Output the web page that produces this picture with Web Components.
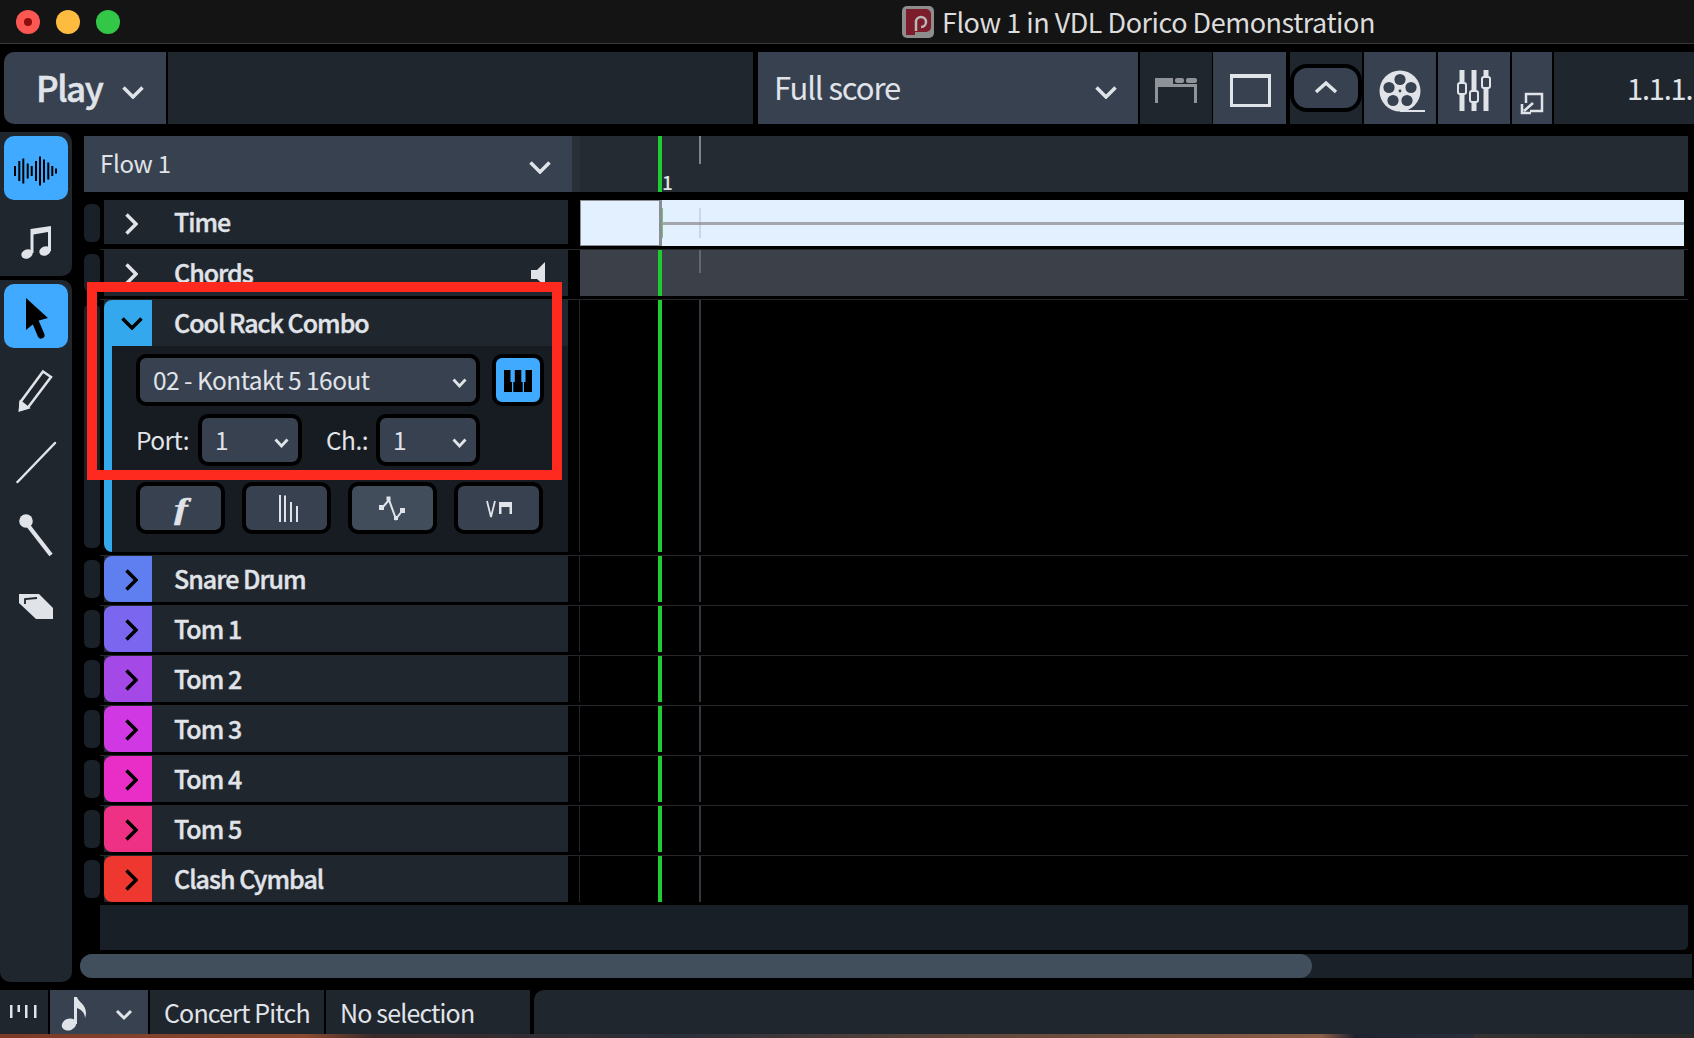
<!DOCTYPE html>
<html>
<head>
<meta charset="utf-8">
<title>Flow 1 in VDL Dorico Demonstration</title>
<style>
    html, body {
        margin: 0;
        padding: 0;
        background: #000;
    }
    body {
        width: 1694px;
        height: 1038px;
        overflow: hidden;
        color: #e0e4e9;
        font-family: "Noto Sans CJK JP", "Noto Sans", sans-serif;
        display: flex;
        flex-direction: column;
    }
    svg { display: block; }
</style>
</head>
<body>

<title-bar text="Flow 1 in VDL Dorico Demonstration"></title-bar>

<top-bar>
    <tool-cell width="162" tone="light" shape="left" lead="4"><pick-label size="35" weight="500" track="-1.5" pad="32" gap="20" chevy="8">Play</pick-label></tool-cell>
    <tool-cell width="585" tone="dark" lead="2"></tool-cell>
    <tool-cell width="380" tone="light" lead="5"><pick-label size="31" weight="400" track="-1.1" pad="16" spread chevy="8">Full score</pick-label></tool-cell>
    <tool-cell width="72" tone="dark" lead="2">
        <svg width="72" height="72" viewBox="0 0 72 72" fill="#8f9398">
            <path d="M15 26h18v6h24v19h-3V35H18v16h-3z"/>
            <rect x="35" y="26" width="9" height="5" rx="2"/><rect x="46" y="26" width="11" height="5" rx="2"/>
        </svg>
    </tool-cell>
    <tool-cell width="73" tone="light" lead="1">
        <svg width="73" height="72" viewBox="0 0 73 72"><rect x="18.5" y="23.5" width="38" height="30" fill="none" stroke="currentColor" stroke-width="3"/><rect x="17" y="22" width="41" height="4" fill="currentColor"/></svg>
    </tool-cell>
    <tool-cell width="72" tone="dark" lead="4">
        <svg width="72" height="72" viewBox="0 0 72 72">
            <rect x="2" y="14" width="68" height="44" rx="15" fill="#374150" stroke="#000" stroke-width="4"/>
            <path d="M26 40l10-9 10 9" fill="none" stroke="currentColor" stroke-width="3.5"/>
        </svg>
    </tool-cell>
    <tool-cell width="72" tone="light" lead="2">
        <svg width="72" height="72" viewBox="0 0 72 72">
            <circle cx="36" cy="39" r="20.5" fill="currentColor"/>
            <path d="M36 58h25v2H36z" fill="currentColor"/>
            <g fill="#374150">
                <circle cx="36" cy="27.5" r="5.6"/><circle cx="47" cy="35.5" r="5.6"/><circle cx="43" cy="48.5" r="5.6"/>
                <circle cx="29" cy="48.5" r="5.6"/><circle cx="25" cy="35.5" r="5.6"/><circle cx="36" cy="39" r="1.4"/>
            </g>
        </svg>
    </tool-cell>
    <tool-cell width="72" tone="light" lead="2">
        <svg width="72" height="72" viewBox="0 0 72 72" fill="currentColor">
            <rect x="21.500" y="18" width="5" height="41"/><rect x="33.500" y="18" width="5" height="41"/><rect x="45.500" y="18" width="5" height="41"/>
            <g fill="#374150" stroke="currentColor" stroke-width="2">
                <rect x="20" y="31" width="8" height="11" rx="2"/><rect x="32" y="39" width="8" height="11" rx="2"/><rect x="44" y="25" width="8" height="11" rx="2"/>
            </g>
        </svg>
    </tool-cell>
    <tool-cell width="40" tone="light" lead="2">
        <svg width="40" height="72" viewBox="0 0 40 72" fill="none" stroke="currentColor" stroke-width="2.5">
            <path d="M14 51V42h16v17H18"/>
            <path d="M21 51l-9 8M10 52v9h9" stroke-width="2.6"/>
        </svg>
    </tool-cell>
    <tool-cell width="140" tone="dark" lead="2"><position-text>1.1.1.</position-text></tool-cell>
</top-bar>

<work-area>
    <tool-rail slot="rail">
        <rail-group>
            <rail-button active>
                <svg width="64" height="64" viewBox="0 0 64 64" stroke="#000" stroke-width="2">
                    <path d="M11 30v10M15.3 25v20M19.3 22.5v25M23.7 27.5v15M27.7 30v10M32 25v20M36 20.5v29M40 23.5v23M44.3 26.5v17M48.3 30v10M52 32.5v5"/>
                </svg>
            </rail-button>
            <rail-button height="72">
                <svg width="72" height="72" viewBox="0 0 72 72" fill="currentColor">
                    <ellipse cx="27" cy="54" rx="5.8" ry="4.5" transform="rotate(-22 27 54)"/>
                    <ellipse cx="45" cy="51" rx="5.8" ry="4.5" transform="rotate(-22 45 51)"/>
                    <path d="M30.500 53V29l20.500-3v25h-3V32l-14.500 2.500V53z"/>
                </svg>
            </rail-button>
        </rail-group>
        <rail-group grow>
            <rail-button active>
                <svg width="64" height="64" viewBox="0 0 64 64" fill="#000">
                    <path d="M22 14l22 20-11 3-11 9z"/>
                    <path d="M29 32l8 19" stroke="#000" stroke-width="7" stroke-linecap="round"/>
                </svg>
            </rail-button>
            <rail-button height="72" first>
                <svg width="72" height="72" viewBox="0 0 72 72" fill="none" stroke="currentColor" stroke-width="2.5">
                    <path d="M43 16.500l8 5.500-23 30.500-8 2.500.5-8z"/>
                    <path d="M20 55l.8-8 7.200 5.700z" fill="currentColor"/>
                </svg>
            </rail-button>
            <rail-button height="72">
                <svg width="72" height="72" viewBox="0 0 72 72"><path d="M17.500 55L55 16" stroke="currentColor" stroke-width="2.5" stroke-linecap="round"/></svg>
            </rail-button>
            <rail-button height="72">
                <svg width="72" height="72" viewBox="0 0 72 72" fill="currentColor"><circle cx="26" cy="22" r="6.8"/><path d="M27 25l24 31" stroke="currentColor" stroke-width="4.2"/></svg>
            </rail-button>
            <rail-button height="72">
                <svg width="72" height="72" viewBox="0 0 72 72" fill="currentColor">
                    <path d="M19 23h20l14 14v11H36L19 32z"/>
                    <path d="M25 33v-5l12-1" fill="none" stroke="#20262e" stroke-width="1.8"/>
                </svg>
            </rail-button>
        </rail-group>
    </tool-rail>

    <flow-head></flow-head>

    <track-row name="Time" short lane="time"></track-row>
    <track-row name="Chords" lane="chords">
        <svg slot="end" width="15" height="24" viewBox="0 0 15 24" fill="currentColor"><path d="M14 0v24L6 17H0V8h6z"/></svg>
    </track-row>
    <track-row name="Cool Rack Combo" color="#33a8ec" open>
        <rack-panel>
            <select-box width="344" slot="device">02 - Kontakt 5 16out</select-box>
            <square-button slot="device" width="52" active>
                <svg width="44" height="44" viewBox="0 0 44 44" fill="#000">
                    <rect x="8" y="12" width="6.500" height="12"/><rect x="18.800" y="12" width="6.500" height="12"/><rect x="29.500" y="12" width="6.500" height="12"/>
                    <rect x="8" y="24" width="8" height="10"/><rect x="17.300" y="24" width="9.400" height="10"/><rect x="28" y="24" width="8" height="10"/>
                </svg>
            </square-button>
            <span slot="port" class="port-label">Port:</span>
            <select-box width="104" slot="port">1</select-box>
            <span slot="port" class="ch">Ch.:</span>
            <select-box width="104" slot="port">1</select-box>
            <square-button slot="tools" width="89"><span style="display:inline-block; font:italic 700 30px 'Liberation Serif', serif; line-height:36px; margin-top:2px; transform:scaleX(1.35); -webkit-text-stroke:.5px currentColor">f</span></square-button>
            <square-button slot="tools" width="89">
                <svg width="40" height="40" viewBox="0 0 40 40" stroke="currentColor" stroke-width="2" style="margin:4px 4px 0 0"><path d="M15 5v27M20 5.500v26.500M26 12v20M32 16v16"/></svg>
            </square-button>
            <square-button slot="tools" width="89" tone="#414d5b">
                <svg width="40" height="40" viewBox="0 0 40 40" fill="currentColor" stroke="none" style="margin:4px 0 0 3px">
                    <path d="M8 18l7-8 7 19 6-8" fill="none" stroke="currentColor" stroke-width="2"/>
                    <rect x="5" y="15" width="5" height="5"/><rect x="12.500" y="6.500" width="4" height="4"/><rect x="20" y="26" width="4" height="4"/><rect x="26" y="18" width="5" height="5"/>
                </svg>
            </square-button>
            <square-button slot="tools" width="89">
                <svg width="40" height="40" viewBox="0 0 40 40" fill="currentColor" style="margin-top:7px">
                    <path d="M8 9l4 16 4-16" fill="none" stroke="currentColor" stroke-width="1.800"/>
                    <path d="M20 10h13v12h-2.500v-7h-8v7H20z"/>
                </svg>
            </square-button>
        </rack-panel>
    </track-row>
    <track-row name="Snare Drum" color="#5f7ef0"></track-row>
    <track-row name="Tom 1" color="#7a66ef"></track-row>
    <track-row name="Tom 2" color="#a548e8"></track-row>
    <track-row name="Tom 3" color="#cf38e2"></track-row>
    <track-row name="Tom 4" color="#e82ec6"></track-row>
    <track-row name="Tom 5" color="#ee3184"></track-row>
    <track-row name="Clash Cymbal" color="#ee372f"></track-row>

    <empty-strip></empty-strip>
    <scroll-bar slot="scroll"></scroll-bar>
    <mark-box slot="mark"></mark-box>
</work-area>

<status-bar>
    <status-cell width="48">
        <svg width="48" height="44" viewBox="0 0 48 44" fill="currentColor"><rect x="10" y="15" width="2.500" height="13"/><rect x="17.500" y="15" width="2.500" height="7"/><rect x="25" y="15" width="2.500" height="13"/><rect x="34" y="15" width="2.500" height="13"/></svg>
    </status-cell>
    <status-cell width="98" tone="light" lead="2">
        <svg width="98" height="44" viewBox="0 0 98 44" fill="currentColor">
            <ellipse cx="19" cy="34.500" rx="7.500" ry="5.800" transform="rotate(-22 19 34.500)"/>
            <path d="M24 34V7h3c1 5 9 7 9 16 0 2-.5 3.500-1 5 0-6-5-9-8-10v16z"/>
            <path d="M67 21l7 7 7-7" fill="none" stroke="currentColor" stroke-width="3"/>
        </svg>
    </status-cell>
    <status-cell width="174" lead="2" pad="14">Concert Pitch</status-cell>
    <status-cell width="204" lead="2" pad="14">No selection</status-cell>
    <status-cell width="1160" lead="4" shape="round"></status-cell>
</status-bar>
<wall-strip></wall-strip>

<script>
const chevronSvg = (w, h, color, dir, stroke) => {
    const paths = {
        down: `M1.500 1.500L${w / 2} ${h - 2}L${w - 1.500} 1.500`,
        right: `M1.500 1.500L${w - 2} ${h / 2}L1.500 ${h - 1.500}`
    };
    return `<svg width="${w}" height="${h}" viewBox="0 0 ${w} ${h}" style="display:block;flex:none"><path d="${paths[dir]}" fill="none" stroke="${color}" stroke-width="${stroke}"/></svg>`;
};

class TitleBar extends HTMLElement {
    constructor() {
        super();
        this.attachShadow({ mode: 'open' });
    }
    connectedCallback() {
        this.shadowRoot.innerHTML = `
        <style>
            :host { display: flex; flex: none; height: 43px; background: #141414; border-bottom: 1px solid #3a3a3a; align-items: center; position: relative; }
            .lights { display: flex; gap: 16px; margin-left: 16px; }
            .lights i { width: 24px; height: 24px; border-radius: 50%; display: flex; align-items: center; justify-content: center; }
            .lights b { width: 8px; height: 8px; border-radius: 50%; background: #8e0c0c; }
            .mid { display: flex; align-items: center; margin-left: 782px; gap: 8px; font-size: 27px; letter-spacing: -.48px; color: #dcdcdc; white-space: nowrap; }
        </style>
        <div class="lights">
            <i style="background:#fc5753"><b></b></i>
            <i style="background:#fdbc40"></i>
            <i style="background:#33c748"></i>
        </div>
        <div class="mid">
            <svg width="32" height="32" viewBox="0 0 32 32">
                <rect width="32" height="32" rx="5" fill="#8d8d8d"/>
                <path d="M4 3h20a5 5 0 0 1 5 5v13a5 5 0 0 1-5 5H13v3H4z" fill="#7d1d2b"/>
                <path d="M14 25v-9a5 5 0 1 1 5 5" fill="none" stroke="#b9b9b9" stroke-width="2.500"/>
            </svg>
            <span>${this.getAttribute('text')}</span>
        </div>`;
    }
}

class TopBar extends HTMLElement {
    constructor() {
        super();
        this.attachShadow({ mode: 'open' });
    }
    connectedCallback() {
        this.shadowRoot.innerHTML = `
        <style>
            :host { display: flex; flex: none; height: 72px; margin-top: 8px; overflow: hidden; }
        </style>
        <slot></slot>`;
    }
}

class ToolCell extends HTMLElement {
    constructor() {
        super();
        this.attachShadow({ mode: 'open' });
    }
    connectedCallback() {
        const tone = this.getAttribute('tone') === 'light' ? '#374150' : '#20262e';
        const radius = this.getAttribute('shape') === 'left' ? '10px 0 0 10px' : '0';
        this.shadowRoot.innerHTML = `
        <style>
            :host {
                display: flex; flex: none; height: 72px; align-items: stretch;
                width: ${this.getAttribute('width')}px;
                margin-left: ${this.getAttribute('lead') || 0}px;
                background: ${tone};
                border-radius: ${radius};
            }
        </style>
        <slot></slot>`;
    }
}

class PickLabel extends HTMLElement {
    constructor() {
        super();
        this.attachShadow({ mode: 'open' });
    }
    connectedCallback() {
        const spread = this.hasAttribute('spread');
        this.shadowRoot.innerHTML = `
        <style>
            :host {
                display: flex; flex: 1; align-items: center;
                justify-content: ${spread ? 'space-between' : 'flex-start'};
                padding: 0 21px 0 ${this.getAttribute('pad')}px;
                font-size: ${this.getAttribute('size')}px;
                font-weight: ${this.getAttribute('weight')};
                letter-spacing: ${this.getAttribute('track')}px;
                -webkit-text-stroke: ${this.getAttribute('weight') === '500' ? '.5px' : '0'};
            }
            span { display: block; line-height: 72px; margin-top: -2px; }
            svg { margin-left: ${this.getAttribute('gap') || 0}px; margin-top: ${this.getAttribute('chevy')}px; }
        </style>
        <span><slot></slot></span>
        ${chevronSvg(22, 13, '#e0e4e9', 'down', 3.5)}`;
    }
}

class PositionText extends HTMLElement {
    constructor() {
        super();
        this.attachShadow({ mode: 'open' });
    }
    connectedCallback() {
        this.shadowRoot.innerHTML = `
        <style>
            :host { display: block; padding-left: 73px; font-size: 29px; letter-spacing: -1.2px; line-height: 70px; white-space: nowrap; overflow: hidden; width: 67px; }
        </style>
        <slot></slot>`;
    }
}

class WorkArea extends HTMLElement {
    constructor() {
        super();
        this.attachShadow({ mode: 'open' });
    }
    connectedCallback() {
        this.shadowRoot.innerHTML = `
        <style>
            :host { display: flex; flex: none; height: 850px; margin-top: 8px; position: relative; gap: 12px; }
            .editor { display: flex; flex-direction: column; width: 1604px; padding-top: 4px; position: relative; }
        </style>
        <slot name="rail"></slot>
        <div class="editor">
            <slot></slot>
            <slot name="scroll"></slot>
        </div>
        <slot name="mark"></slot>`;
    }
}

class ToolRail extends HTMLElement {
    constructor() {
        super();
        this.attachShadow({ mode: 'open' });
    }
    connectedCallback() {
        this.shadowRoot.innerHTML = `
        <style>
            :host { display: flex; flex: none; flex-direction: column; gap: 4px; width: 72px; }
        </style>
        <slot></slot>`;
    }
}

class RailGroup extends HTMLElement {
    constructor() {
        super();
        this.attachShadow({ mode: 'open' });
    }
    connectedCallback() {
        const grow = this.hasAttribute('grow');
        this.shadowRoot.innerHTML = `
        <style>
            :host {
                display: flex; flex-direction: column; padding: 4px 0; box-sizing: border-box;
                background: #20262e; border-radius: 0 10px 10px 0; width: 72px;
                ${grow ? 'flex: 1; border-radius: 0 10px 10px 10px;' : 'height: 144px;'}
            }
        </style>
        <slot></slot>`;
    }
}

class RailButton extends HTMLElement {
    constructor() {
        super();
        this.attachShadow({ mode: 'open' });
    }
    connectedCallback() {
        const active = this.hasAttribute('active');
        this.shadowRoot.innerHTML = `
        <style>
            :host {
                display: block; flex: none;
                ${active
                    ? 'width: 64px; height: 64px; margin-left: 4px; background: #3faaff; border-radius: 10px;'
                    : `width: 72px; height: ${this.getAttribute('height')}px;`}
                ${this.hasAttribute('first') ? 'margin-top: 7px;' : ''}
            }
        </style>
        <slot></slot>`;
    }
}

class FlowHead extends HTMLElement {
    constructor() {
        super();
        this.attachShadow({ mode: 'open' });
    }
    connectedCallback() {
        this.shadowRoot.innerHTML = `
        <style>
            :host { display: flex; flex: none; height: 56px; margin-bottom: 8px; }
            .pick { width: 488px; background: #374150; display: flex; align-items: center; justify-content: space-between; box-sizing: border-box; padding: 0 21px 0 16px; font-size: 24px; letter-spacing: -.3px; }
            .pick span { margin-top: -3px; }
            .pick svg { margin-top: 7px; }
            .edge { width: 8px; background: #2a3038; }
            .ruler { width: 1108px; background: #252b33; display: flex; }
            .pad { width: 78px; }
            .play { width: 4px; background: #20cc32; }
            .num { width: 37px; font-size: 19px; font-weight: 500; line-height: 18px; padding-top: 37px; box-sizing: border-box; }
            .tick { width: 2px; height: 28px; background: #80858b; }
        </style>
        <div class="pick"><span>Flow 1</span>${chevronSvg(22, 13, '#e0e4e9', 'down', 3.5)}</div>
        <div class="edge"></div>
        <div class="ruler">
            <div class="pad"></div><div class="play"></div><div class="num">1</div><div class="tick"></div>
        </div>`;
    }
}

class TrackLane extends HTMLElement {
    constructor() {
        super();
        this.attachShadow({ mode: 'open' });
    }
    connectedCallback() {
        const kind = this.getAttribute('kind') || 'plain';
        let inner = `<div class="pad"></div><div class="play"></div><div class="gap"></div><div class="tick"></div>`;
        if (kind === 'time') {
            inner = `<div class="start"></div><div class="rest"><div class="cue"></div><div class="bar"></div><div class="faint"></div></div>`;
        }
        const styles = {
            plain: 'background: #000; width: 1108px; border-left: 1px solid #24272c; margin-left: -1px;',
            chords: 'background: #3c4048; width: 1104px;',
            time: 'background: #e3f0ff; width: 1104px;'
        };
        this.shadowRoot.innerHTML = `
        <style>
            :host { display: flex; height: 46px; position: relative; ${styles[kind]} }
            .pad { width: 78px; }
            .play { width: 4px; background: #20cc32; }
            .gap { width: 37px; }
            .tick { width: 2px; background: ${kind === 'chords' ? '#616871' : '#34383e'}; ${kind === 'chords' ? 'height: 23px;' : ''} }
            .start { width: 80px; box-sizing: border-box; border: 1px solid #8a8d92; }
            .rest { flex: 1; display: flex; align-items: center; position: relative; border-left: 2px solid #8a8d92; }
            .cue { width: 1px; height: 30px; background: #72c47c; }
            .bar { flex: 1; height: 3px; background: #a3a7ad; margin-top: 1px; }
            .faint { position: absolute; left: 37px; top: 8px; width: 2px; height: 30px; background: rgba(130, 140, 155, .25); }
        </style>
        ${inner}`;
    }
}

class TrackRow extends HTMLElement {
    constructor() {
        super();
        this.attachShadow({ mode: 'open' });
    }
    connectedCallback() {
        const color = this.getAttribute('color');
        const open = this.hasAttribute('open');
        const short = this.hasAttribute('short');
        const height = open ? 252 : 46;
        const arrow = open
            ? chevronSvg(22, 13, '#000', 'down', 3.5)
            : chevronSvg(13, 22, color ? '#000' : '#e0e4e9', 'right', 3.5);
        this.shadowRoot.innerHTML = `
        <style>
            :host { display: grid; flex: none; grid-template-columns: 16px 4px 464px 12px 1108px; grid-template-rows: ${height}px 3px 1px; }
            .stub { grid-column: 1; background: #1a2028; border-radius: 6px; margin: 4px 0; }
            .track { grid-column: 3; display: flex; flex-direction: column; ${short ? 'height: 44px;' : ''} }
            .head { display: flex; flex: none; height: ${short ? 44 : 46}px; background: #20262e; align-items: center; font-size: 25px; font-weight: 500; letter-spacing: -1px; -webkit-text-stroke: .4px; }
            .badge {
                flex: none; width: 48px; height: 100%; display: flex; align-items: center; justify-content: center; box-sizing: border-box;
                background: ${color || 'transparent'};
                border-radius: ${open ? '8px 0 0 0' : '8px 0 0 8px'};
                padding-left: ${open ? 8 : 7}px;
                padding-top: ${short ? 4 : 1}px;
            }
            .name { flex: 1; margin-left: 22px; margin-top: -3px; white-space: nowrap; }
            ::slotted([slot=end]) { margin-right: 22px; margin-top: 1px; }
            .lane { grid-column: 5; }
            .line { grid-column: 2 / -1; grid-row: 3; background: #24272c; }
            .body { flex: 1; display: flex; }
            .strip { width: 8px; background: ${color}; border-radius: 0 0 0 8px; }
        </style>
        <div class="stub"></div>
        <div class="track">
            <div class="head">
                <div class="badge">${arrow}</div>
                <div class="name">${this.getAttribute('name')}</div>
                <slot name="end"></slot>
            </div>
            ${open ? `<div class="body"><div class="strip"></div><slot></slot></div>` : ''}
        </div>
        <track-lane class="lane" kind="${this.getAttribute('lane') || 'plain'}"></track-lane>
        <div class="line"></div>`;
        if (open) {
            this.shadowRoot.querySelector('.lane').style.height = '252px';
        }
    }
}

class RackPanel extends HTMLElement {
    constructor() {
        super();
        this.attachShadow({ mode: 'open' });
    }
    connectedCallback() {
        this.shadowRoot.innerHTML = `
        <style>
            :host { display: flex; flex: 1; flex-direction: column; gap: 8px; background: #171c23; padding: 8px 0 0 24px; font-size: 24.500px; letter-spacing: -.55px; }
            .row { display: flex; height: 52px; }
            .device { gap: 12px; }
            .port { align-items: center; }
            .tools { gap: 17px; margin-top: 8px; }
            ::slotted(span[slot=port]) { margin-top: -2px; }
            ::slotted(span.port-label) { width: 62px; }
            ::slotted(span.ch) { margin-left: 24px; width: 50px; }
        </style>
        <div class="row device"><slot name="device"></slot></div>
        <div class="row port"><slot name="port"></slot></div>
        <div class="row tools"><slot name="tools"></slot></div>`;
    }
}

class SelectBox extends HTMLElement {
    constructor() {
        super();
        this.attachShadow({ mode: 'open' });
    }
    connectedCallback() {
        this.shadowRoot.innerHTML = `
        <style>
            :host {
                display: flex; flex: none; height: 52px; box-sizing: border-box;
                width: ${this.getAttribute('width')}px;
                border: 4px solid #000; border-radius: 10px; background: #374150;
                align-items: center; justify-content: space-between; padding: 0 9px 0 13px;
            }
            span { margin-top: -1px; white-space: nowrap; }
            svg { margin-top: 5px; }
        </style>
        <span><slot></slot></span>
        ${chevronSvg(15, 10, '#e0e4e9', 'down', 2.800)}`;
    }
}

class SquareButton extends HTMLElement {
    constructor() {
        super();
        this.attachShadow({ mode: 'open' });
    }
    connectedCallback() {
        const bg = this.hasAttribute('active') ? '#3faaff' : (this.getAttribute('tone') || '#374150');
        this.shadowRoot.innerHTML = `
        <style>
            :host {
                display: flex; flex: none; height: 52px; box-sizing: border-box;
                width: ${this.getAttribute('width')}px;
                border: 4px solid #000; border-radius: 10px; background: ${bg};
                align-items: center; justify-content: center;
            }
        </style>
        <slot></slot>`;
    }
}

class EmptyStrip extends HTMLElement {
    constructor() {
        super();
        this.attachShadow({ mode: 'open' });
    }
    connectedCallback() {
        this.shadowRoot.innerHTML = `
        <style>
            :host { display: block; flex: none; height: 45px; width: 1588px; margin: -1px 0 0 16px; background: #181f26; border-radius: 0 0 5px 0; }
        </style>`;
    }
}

class ScrollBar extends HTMLElement {
    constructor() {
        super();
        this.attachShadow({ mode: 'open' });
    }
    connectedCallback() {
        this.shadowRoot.innerHTML = `
        <style>
            :host { display: block; height: 24px; width: 1612px; margin: 4px 0 0 -4px; background: #1a2128; border-radius: 12px 0 0 12px; }
            div { width: 1232px; height: 24px; background: #414e5c; border-radius: 12px; }
        </style>
        <div></div>`;
    }
}

class MarkBox extends HTMLElement {
    constructor() {
        super();
        this.attachShadow({ mode: 'open' });
    }
    connectedCallback() {
        // the red annotation lies over the tracks
        this.shadowRoot.innerHTML = `
        <style>
            :host { position: absolute; left: 87px; top: 150px; width: 455px; height: 178px; border: 10px solid #ff2a1f; }
        </style>`;
    }
}

class StatusBar extends HTMLElement {
    constructor() {
        super();
        this.attachShadow({ mode: 'open' });
    }
    connectedCallback() {
        this.shadowRoot.innerHTML = `
        <style>
            :host { display: flex; flex: none; height: 44px; margin-top: 8px; overflow: hidden; font-size: 25px; letter-spacing: -.85px; }
        </style>
        <slot></slot>`;
    }
}

class StatusCell extends HTMLElement {
    constructor() {
        super();
        this.attachShadow({ mode: 'open' });
    }
    connectedCallback() {
        const light = this.getAttribute('tone') === 'light';
        const round = this.getAttribute('shape') === 'round';
        this.shadowRoot.innerHTML = `
        <style>
            :host {
                display: block; flex: none; height: 44px; box-sizing: border-box; white-space: nowrap;
                width: ${this.getAttribute('width')}px;
                margin-left: ${this.getAttribute('lead') || 0}px;
                padding-left: ${this.getAttribute('pad') || 0}px;
                background: ${light ? '#374150' : '#20262e'};
                line-height: 44px;
                ${round ? 'border-radius: 10px 0 0 0;' : ''}
            }
        </style>
        <slot></slot>`;
    }
}

class WallStrip extends HTMLElement {
    constructor() {
        super();
        this.attachShadow({ mode: 'open' });
    }
    connectedCallback() {
        this.shadowRoot.innerHTML = `
        <style>
            :host {
                display: block; flex: none; height: 4px;
                background: linear-gradient(90deg, #7a3a26 0, #8a4a30 18%, #3a2a2a 22%, #2a2e3a 40%, #5a443a 55%, #7a5442 70%, #8a5e48 78%, #1e2230 80%, #2a2e3a 87%, #333 87%, #2a2a2a 100%);
            }
        </style>`;
    }
}

window.customElements.define('title-bar', TitleBar);
window.customElements.define('top-bar', TopBar);
window.customElements.define('tool-cell', ToolCell);
window.customElements.define('pick-label', PickLabel);
window.customElements.define('position-text', PositionText);
window.customElements.define('work-area', WorkArea);
window.customElements.define('tool-rail', ToolRail);
window.customElements.define('rail-group', RailGroup);
window.customElements.define('rail-button', RailButton);
window.customElements.define('flow-head', FlowHead);
window.customElements.define('track-lane', TrackLane);
window.customElements.define('track-row', TrackRow);
window.customElements.define('rack-panel', RackPanel);
window.customElements.define('select-box', SelectBox);
window.customElements.define('square-button', SquareButton);
window.customElements.define('empty-strip', EmptyStrip);
window.customElements.define('scroll-bar', ScrollBar);
window.customElements.define('mark-box', MarkBox);
window.customElements.define('status-bar', StatusBar);
window.customElements.define('status-cell', StatusCell);
window.customElements.define('wall-strip', WallStrip);
</script>
</body>
</html>
